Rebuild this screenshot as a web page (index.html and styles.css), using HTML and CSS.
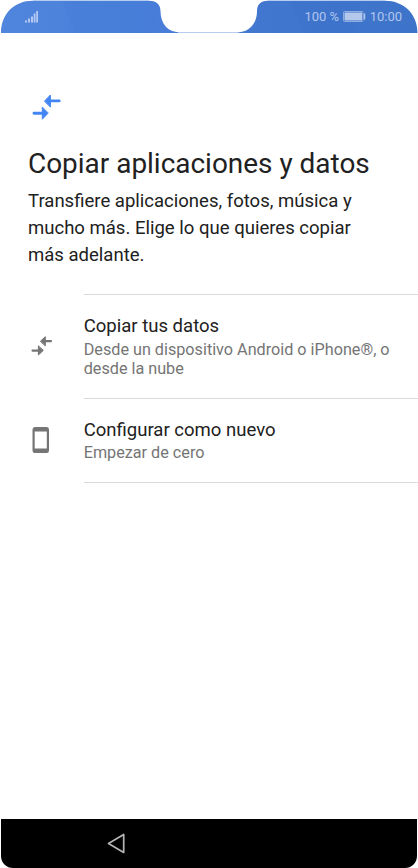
FILE: index.html
```html
<!DOCTYPE html>
<html lang="es">
<head>
<meta charset="utf-8">
<title>Copiar aplicaciones y datos</title>
<link rel="stylesheet" href="styles.css">
</head>
<body>
<div class="screen">
  <header class="status">
    <svg class="status-bg" width="418" height="33" viewBox="0 0 418 33" aria-hidden="true">
      <defs>
        <linearGradient id="sky" x1="0" x2="1"><stop offset="0" stop-color="#5085dd"/><stop offset=".14" stop-color="#4e83dc"/><stop offset=".19" stop-color="#4a80da"/><stop offset=".4" stop-color="#487ed9"/><stop offset=".62" stop-color="#4277cf"/><stop offset="1" stop-color="#3e73ca"/></linearGradient>
      </defs>
      <path d="M1 33C1 14 14 .7 33 .7H149C157 .7 160.500 5 160.500 11C160.500 24 168 32.500 181 32.500H236C249 32.500 257 24 257 11C257 5 260 .7 268 .7H385C404 .7 417.500 14 417.500 33Z" fill="url(#sky)"/>
      <path d="M63 1L75 33H151L160 9C159 4 156 1 149 1Z" fill="#457cd6" opacity=".25"/>
      <path d="M290 1L304 33H355L360 1Z" fill="#3b70c9" opacity=".3"/>
      <path d="M33 .5H149M268 .5H385M178 32.500H238" stroke="#b8ccef" fill="none"/>
    </svg>
    <svg class="signal" width="14" height="13" viewBox="0 0 14 13" fill="#b3c9f1" aria-hidden="true">
      <path d="M0 10.500h2V12.500H0zM3 8.500h2v4H3zM6 6.500h2v6H6zM8.700 3.500h1.800v9H8.700zM11.200 1h1.800v11.500h-1.800z"/>
    </svg>
    <span class="percent">100 %</span>
    <svg class="battery" width="23" height="11" viewBox="0 0 23 11" fill="#b4c8ec" aria-hidden="true">
      <rect x=".5" y=".5" width="19.500" height="10" rx="1" fill="none" stroke="#8eacdf"/>
      <rect x="1.500" y="1.500" width="17.500" height="8"/>
      <rect x="20.700" y="2.500" width="1.500" height="6"/>
    </svg>
    <span class="time">10:00</span>
  </header>
  <main>
    <svg class="hero-icon" width="29" height="26" viewBox="0 0 29 26" fill="#4285f4" stroke="#4285f4" stroke-linejoin="round" stroke-linecap="round" aria-hidden="true">
      <path d="M12.700 6.900L18.400 1V12.800ZM16 19.300L10.300 25.200V13.400Z"/>
      <path d="M18 6.900H27.200M10 19.300H2" stroke-width="2.900"/>
    </svg>
    <h1>Copiar aplicaciones y datos</h1>
    <p class="intro">Transfiere aplicaciones, fotos, música y mucho más. Elige lo que quieres copiar más adelante.</p>
    <ul class="options">
      <li class="option">
        <svg class="option-icon" width="22" height="20" viewBox="0 0 22 20" fill="#757575" stroke="#757575" stroke-linejoin="round" stroke-linecap="round" aria-hidden="true">
          <path stroke-width="1" d="M9.600 5.100L14.300 .7V9.500ZM12.100 14.600L7.400 19V10.200Z"/>
          <path stroke-width="2.200" d="M14 5.100H20M8 14.600H1.500"/>
        </svg>
        <div class="option-text">
          <h2>Copiar tus datos</h2>
          <p>Desde un dispositivo Android o iPhone®, o desde la nube</p>
        </div>
      </li>
      <li class="option">
        <svg class="option-icon" width="22" height="26" viewBox="0 0 22 26" aria-hidden="true">
          <path fill="#757575" fill-rule="evenodd" d="M4.800 0H16.800Q19 0 19 2.500V23.500Q19 26 16.800 26H4.800Q2.500 26 2.500 23.500V2.500Q2.500 0 4.800 0ZM4.700 4.500V21.500H16.800V4.500Z"/>
        </svg>
        <div class="option-text">
          <h2>Configurar como nuevo</h2>
          <p>Empezar de cero</p>
        </div>
      </li>
    </ul>
  </main>
  <footer class="nav">
    <svg class="back" width="18" height="21" viewBox="0 0 18 21" aria-hidden="true">
      <path d="M1.500 10.500L16.700 1.500V19.500Z" fill="none" stroke="#b4b4b4" stroke-width="1.700" stroke-linejoin="round"/>
    </svg>
  </footer>
</div>
</body>
</html>
```
FILE: styles.css
```css
* { box-sizing: border-box; }
body, h1, h2, p, ul { margin: 0; padding: 0; }
body { background: #fff; font-family: Roboto, sans-serif; color: #212121; }
.screen { width: 418px; height: 868px; display: flex; flex-direction: column; }
.status {
  position: relative;
  height: 33px;
  flex: none;
  display: flex;
  align-items: center;
  padding: 0 16px 0 25px;
  font-size: 13px;
  line-height: 33px;
  color: #b1c6ec;
}
.status > * { position: relative; }
.status .status-bg { position: absolute; left: 0; top: 0; }
.percent { margin-left: auto; }
.battery { margin: 0 4px 0 3.5px; }
main { flex: 1; padding-top: 61px; }
.hero-icon { display: block; margin-left: 32px; }
h1 { margin: 26px 0 0 28px; font-size: 27.95px; line-height: 36px; font-weight: 400; white-space: nowrap; }
.intro { width: 350px; margin: 6px 0 0 28px; font-size: 18.55px; line-height: 26.8px; }
.options { list-style: none; margin-top: 25.6px; }
.option { display: flex; align-items: center; padding-left: 31px; }
.option:last-child { padding-left: 30px; }
.option-icon { flex: none; }
.option-text { flex: 1; margin-left: 30.7px; padding: 19px 20px 20px 0; border-top: 1px solid #dadada; }
.option:first-child .option-text { padding-bottom: 20px; }
.option:first-child p { margin-top: 2px; }
.option:last-child .option-text { border-bottom: 1px solid #dadada; margin-left: 31.7px; }
h2 { font-size: 18.55px; line-height: 24px; font-weight: 400; }
.option p { font-size: 16.2px; line-height: 19px; color: #757575; margin: 1px -10px 0 0; }
.option:first-child p { margin-top: 2px; }
.nav {
  height: 49px;
  flex: none;
  margin: 0 1px 0 1px;
  background: #000;
  border-radius: 0 0 12px 12px;
  padding: 14px 0 0 106px;
}
.back { display: block; }
```
